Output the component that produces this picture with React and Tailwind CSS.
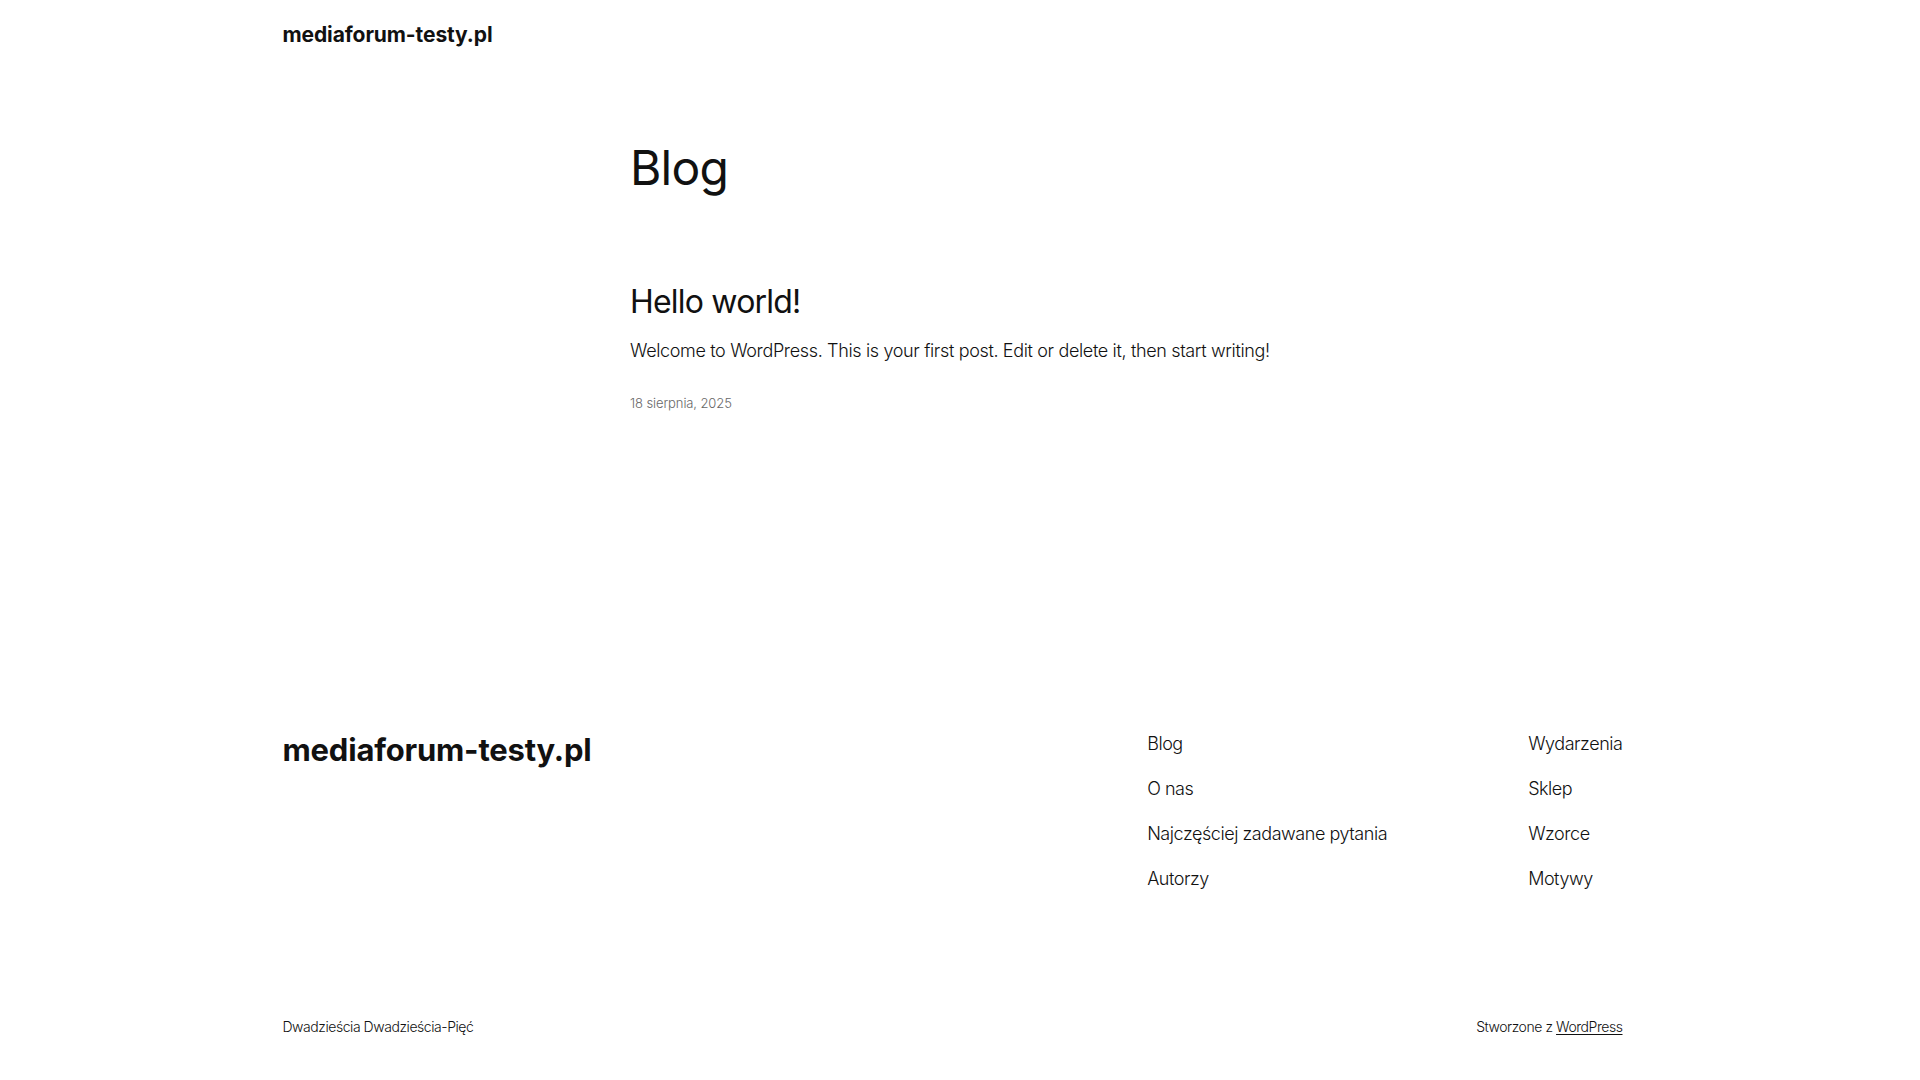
export default function App() {
  const col1 = ["Blog", "O nas", "Najczęściej zadawane pytania", "Autorzy"];
  const col2 = ["Wydarzenia", "Sklep", "Wzorce", "Motywy"];
  return (
    <div className="min-h-screen bg-white pr-[15px] text-[#111111] font-['Inter','Liberation_Sans',sans-serif]">
      <header className="pt-[21px] pb-[19px]">
        <div className="mx-auto w-[1340px]">
          <a href="#" className="block text-[21px] font-bold leading-[28px] tracking-[-0.1px]">
            mediaforum-testy.pl
          </a>
        </div>
      </header>

      <main className="pt-[73px] pb-[318px]">
        <div className="mx-auto w-[645px]">
          <h1 className="text-[48px] leading-[54px] font-normal tracking-[-0.8px]">Blog</h1>
          <article className="mt-[89px]">
            <h2 className="text-[32px] leading-[36px] font-normal tracking-[-0.8px]">Hello world!</h2>
            <p className="mt-[18px] text-[18px] leading-[25px] font-light tracking-[-0.35px]">
              Welcome to WordPress. This is your first post. Edit or delete it, then start writing!
            </p>
            <div className="mt-[30px] text-[13px] leading-[20px] font-light tracking-[-0.1px] text-[#686868]">
              18 sierpnia, 2025
            </div>
          </article>
        </div>
      </main>

      <footer className="pb-[64px]">
        <div className="mx-auto w-[1340px]">
          <div className="flex items-start justify-between">
            <a href="#" className="mt-[1px] block text-[31px] font-bold leading-[36px] tracking-[-0.2px]">
              mediaforum-testy.pl
            </a>
            <div className="flex gap-[141px]">
              <nav className="flex flex-col gap-[20px]">
                {col1.map((t) => (
                  <a key={t} href="#" className="block text-[18px] leading-[25px] font-light tracking-[-0.45px]">
                    {t}
                  </a>
                ))}
              </nav>
              <nav className="flex flex-col gap-[20px]">
                {col2.map((t) => (
                  <a key={t} href="#" className="block text-[18px] leading-[25px] font-light tracking-[-0.45px]">
                    {t}
                  </a>
                ))}
              </nav>
            </div>
          </div>
          <div className="mt-[126px] flex items-center justify-between text-[14px] leading-[20px] font-light tracking-[-0.45px]">
            <p>Dwadzieścia Dwadzieścia-Pięć</p>
            <p>
              Stworzone z{" "}
              <a href="#" className="underline underline-offset-2">
                WordPress
              </a>
            </p>
          </div>
        </div>
      </footer>
    </div>
  );
}
